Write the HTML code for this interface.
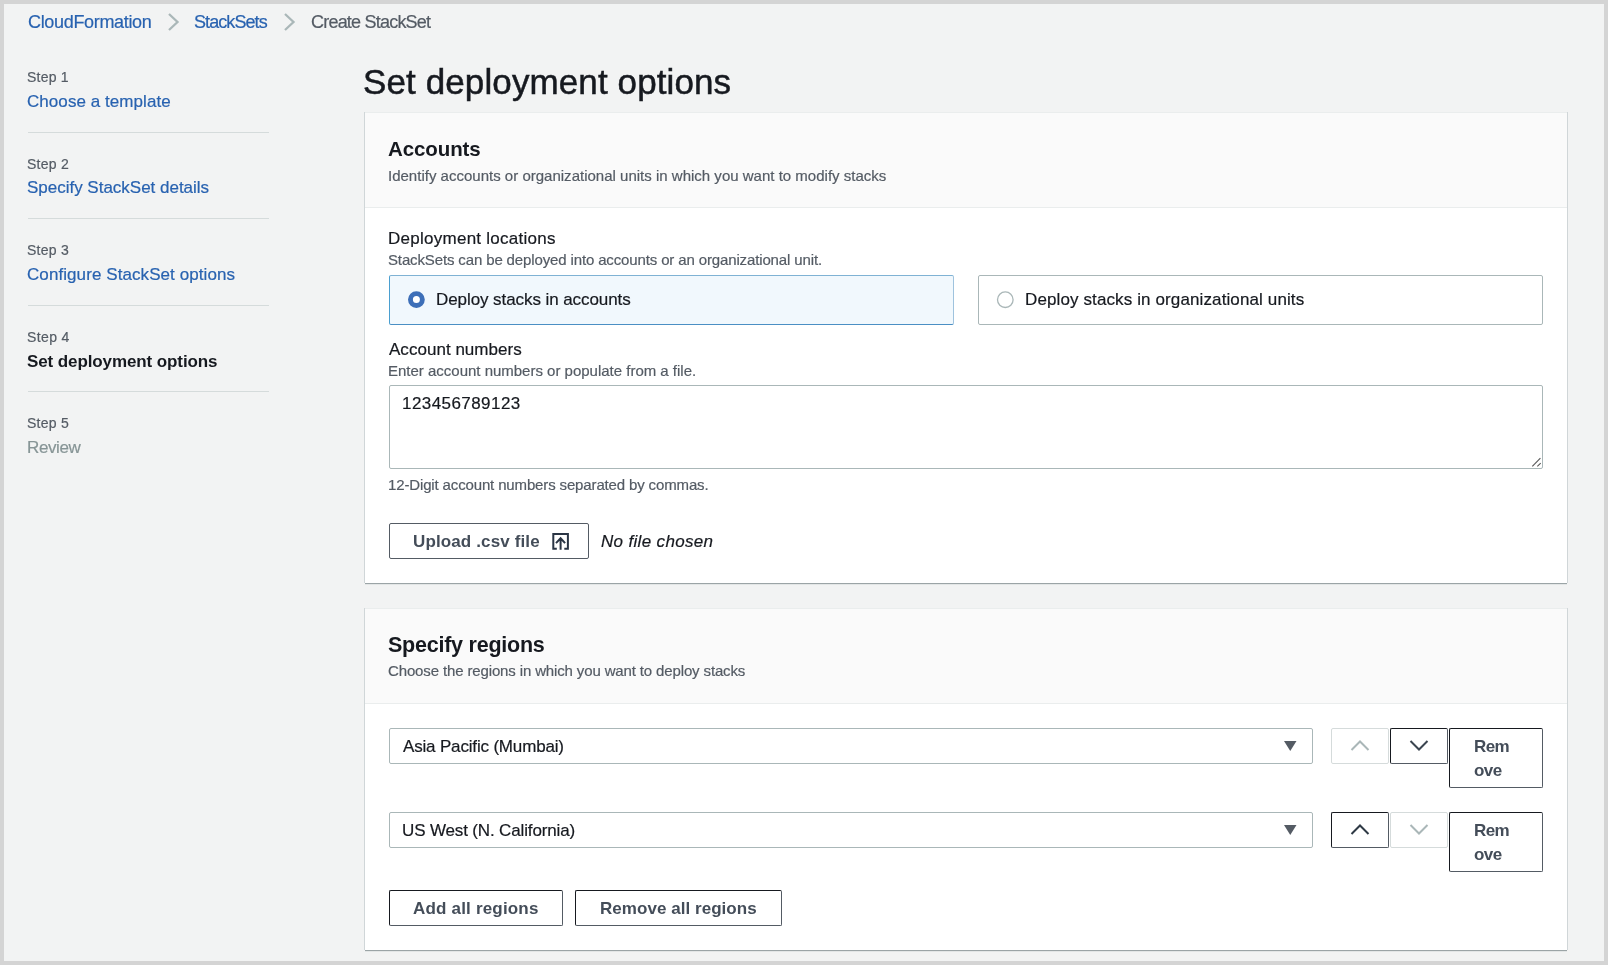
<!DOCTYPE html>
<html><head><meta charset="utf-8">
<style>
html,body{margin:0;padding:0;}
body{width:1608px;height:965px;position:relative;overflow:hidden;background:#d4d4d4;font-family:"Liberation Sans",sans-serif;color:#16191f;}
.a{position:absolute;box-sizing:border-box;}
.t{position:absolute;line-height:1;white-space:nowrap;will-change:transform;}
.sep{position:absolute;left:28px;width:241px;height:1px;background:#d5dbdb;}
.box{position:absolute;box-sizing:border-box;left:365px;width:1202px;background:#fff;border-top:1px solid #eaeded;box-shadow:0 1px 0 0 #9ba4a6,0 2px 0 0 rgba(0,28,36,.06),1px 0 0 0 #d0d6d8,-1px 0 0 0 #d0d6d8;}
.hdr{position:absolute;left:0;top:0;right:0;height:95px;box-sizing:border-box;background:#fafafa;border-bottom:1px solid #eaeded;}
.btn{position:absolute;box-sizing:border-box;border:1px solid #545b64;border-radius:2px;background:#fff;}
.inp{position:absolute;box-sizing:border-box;border:1px solid #aab7b8;border-radius:2px;background:#fff;}
svg{position:absolute;overflow:visible;}
</style></head><body>
<div class="a" style="left:4px;top:4px;width:1600px;height:957px;background:#f2f3f3"></div>
<!-- breadcrumb chevrons -->
<svg style="left:168px;top:13px" width="11" height="18"><polyline points="1,1 9.5,9 1,17" fill="none" stroke="#aab7b8" stroke-width="2.3"/></svg>
<svg style="left:284px;top:13px" width="11" height="18"><polyline points="1,1 9.5,9 1,17" fill="none" stroke="#aab7b8" stroke-width="2.3"/></svg>
<!-- nav separators -->
<div class="sep" style="top:132px"></div>
<div class="sep" style="top:218px"></div>
<div class="sep" style="top:305px"></div>
<div class="sep" style="top:391px"></div>
<!-- container 1 -->
<div class="box" style="top:112px;height:471px"><div class="hdr"></div></div>
<!-- tiles -->
<div class="a" style="left:389px;top:275px;width:565px;height:50px;border:1px solid #4a9fd0;border-top-color:#7fb2d4;border-right-color:#9fc3de;border-bottom-color:#4a8fc4;border-radius:2px;background:#f1f8fd"></div>
<div class="a" style="left:978px;top:275px;width:565px;height:50px;border:1px solid #aab7b8;border-radius:2px;background:#fff"></div>
<svg style="left:408px;top:291px" width="17" height="17"><circle cx="8.4" cy="8.6" r="5.95" fill="#fff" stroke="#3d6fb8" stroke-width="4.9"/></svg>
<svg style="left:997px;top:291px" width="17" height="17"><circle cx="8.3" cy="8.7" r="7.8" fill="#fff" stroke="#aab7b8" stroke-width="1.3"/></svg>
<!-- textarea -->
<div class="inp" style="left:389px;top:385px;width:1154px;height:84px"></div>
<svg style="left:1530px;top:455px" width="12" height="12"><line x1="2.3" y1="11.3" x2="10.4" y2="3.2" stroke="#555" stroke-width="1.1"/><line x1="7.3" y1="11.3" x2="10.7" y2="8.2" stroke="#555" stroke-width="1.1"/></svg>
<!-- upload button -->
<div class="btn" style="left:389px;top:523px;width:200px;height:36px"></div>
<svg style="left:552px;top:533px" width="17" height="17"><path d="M4.8,15.7 H1.3 V1 H15.9 V15.7 H12.3" fill="none" stroke="#2a3544" stroke-width="2"/><path d="M8.6,16.7 V5.3 M4,10.1 L8.6,5.3 L13.1,10.1" fill="none" stroke="#2a3544" stroke-width="2"/></svg>
<!-- container 2 -->
<div class="box" style="top:608px;height:342px"><div class="hdr"></div></div>
<!-- selects -->
<div class="inp" style="left:389px;top:728px;width:924px;height:36px"></div>
<div class="inp" style="left:389px;top:812px;width:924px;height:36px"></div>
<svg style="left:1284px;top:741px" width="13" height="10"><path d="M0,0 H12.5 L6.25,10 Z" fill="#545b64"/></svg>
<svg style="left:1284px;top:825px" width="13" height="10"><path d="M0,0 H12.5 L6.25,10 Z" fill="#545b64"/></svg>
<!-- row 1 buttons -->
<div class="a" style="left:1331px;top:728px;width:58px;height:36px;border:1px solid #d5dbdb;border-radius:2px;background:#fff"></div>
<svg style="left:1351px;top:740.3px" width="18" height="11"><polyline points="0.5,10 9,1.5 17.5,10" fill="none" stroke="#aab7b8" stroke-width="2"/></svg>
<div class="btn" style="left:1390px;top:728px;width:58px;height:36px;border-color:#16191f #545b64 #545b64 #16191f"></div>
<svg style="left:1410px;top:740px" width="18" height="11"><polyline points="0.5,1 9,9.5 17.5,1" fill="none" stroke="#3b4550" stroke-width="2"/></svg>
<div class="btn" style="left:1449px;top:728px;width:94px;height:60px;border-color:#16191f #545b64 #545b64 #16191f"></div>
<!-- row 2 buttons -->
<div class="btn" style="left:1331px;top:812px;width:58px;height:36px;border-color:#16191f #545b64 #545b64 #16191f"></div>
<svg style="left:1351px;top:824.4px" width="18" height="11"><polyline points="0.5,10 9,1.5 17.5,10" fill="none" stroke="#2e3945" stroke-width="2"/></svg>
<div class="a" style="left:1390px;top:812px;width:58px;height:36px;border:1px solid #d5dbdb;border-radius:2px;background:#fff"></div>
<svg style="left:1410px;top:824px" width="18" height="11"><polyline points="0.5,1 9,9.5 17.5,1" fill="none" stroke="#aab7b8" stroke-width="2"/></svg>
<div class="btn" style="left:1449px;top:812px;width:94px;height:60px;border-color:#16191f #545b64 #545b64 #16191f"></div>
<!-- add/remove all -->
<div class="btn" style="left:389px;top:890px;width:174px;height:36px;border-color:#16191f #545b64 #545b64 #16191f"></div>
<div class="btn" style="left:575px;top:890px;width:207px;height:36px;border-color:#16191f #545b64 #545b64 #16191f"></div>
<div class="t" style="left:27.8px;top:13px;font-size:18px;font-weight:400;font-style:normal;letter-spacing:-0.331px;color:#2862b0;-webkit-text-stroke:0.2px #2862b0">CloudFormation</div>
<div class="t" style="left:194.2px;top:13px;font-size:18px;font-weight:400;font-style:normal;letter-spacing:-0.925px;color:#2862b0;-webkit-text-stroke:0.2px #2862b0">StackSets</div>
<div class="t" style="left:311.4px;top:13px;font-size:18px;font-weight:400;font-style:normal;letter-spacing:-0.786px;color:#545b64;-webkit-text-stroke:0.2px #545b64">Create StackSet</div>
<div class="t" style="left:27.4px;top:70px;font-size:14px;font-weight:400;font-style:normal;letter-spacing:0.22px;color:#545b64;-webkit-text-stroke:0.2px #545b64">Step 1</div>
<div class="t" style="left:27.4px;top:93px;font-size:17px;font-weight:400;font-style:normal;letter-spacing:0.062px;color:#2862b0;-webkit-text-stroke:0.2px #2862b0">Choose a template</div>
<div class="t" style="left:27.4px;top:157px;font-size:14px;font-weight:400;font-style:normal;letter-spacing:0.28px;color:#545b64;-webkit-text-stroke:0.2px #545b64">Step 2</div>
<div class="t" style="left:27.3px;top:179px;font-size:17px;font-weight:400;font-style:normal;letter-spacing:-0.013px;color:#2862b0;-webkit-text-stroke:0.2px #2862b0">Specify StackSet details</div>
<div class="t" style="left:27.4px;top:243px;font-size:14px;font-weight:400;font-style:normal;letter-spacing:0.28px;color:#545b64;-webkit-text-stroke:0.2px #545b64">Step 3</div>
<div class="t" style="left:27.3px;top:266px;font-size:17px;font-weight:400;font-style:normal;letter-spacing:0.08px;color:#2862b0;-webkit-text-stroke:0.2px #2862b0">Configure StackSet options</div>
<div class="t" style="left:27.4px;top:330px;font-size:14px;font-weight:400;font-style:normal;letter-spacing:0.38px;color:#545b64;-webkit-text-stroke:0.2px #545b64">Step 4</div>
<div class="t" style="left:27.4px;top:353px;font-size:17px;font-weight:700;font-style:normal;letter-spacing:-0.1px;color:#16191f;-webkit-text-stroke:0.0px #16191f">Set deployment options</div>
<div class="t" style="left:27.4px;top:416px;font-size:14px;font-weight:400;font-style:normal;letter-spacing:0.28px;color:#545b64;-webkit-text-stroke:0.2px #545b64">Step 5</div>
<div class="t" style="left:27.4px;top:439px;font-size:17px;font-weight:400;font-style:normal;letter-spacing:-0.4px;color:#879596;-webkit-text-stroke:0.2px #879596">Review</div>
<div class="t" style="left:363.2px;top:64px;font-size:35px;font-weight:400;font-style:normal;letter-spacing:0.11px;color:#16191f;-webkit-text-stroke:0.5px #16191f">Set deployment options</div>
<div class="t" style="left:388.0px;top:139px;font-size:20.5px;font-weight:700;font-style:normal;letter-spacing:-0.1px;color:#16191f;-webkit-text-stroke:0.0px #16191f">Accounts</div>
<div class="t" style="left:388.0px;top:168px;font-size:15px;font-weight:400;font-style:normal;letter-spacing:0.007px;color:#545b64;-webkit-text-stroke:0.2px #545b64">Identify accounts or organizational units in which you want to modify stacks</div>
<div class="t" style="left:388.4px;top:230px;font-size:17px;font-weight:400;font-style:normal;letter-spacing:0.263px;color:#16191f;-webkit-text-stroke:0.2px #16191f">Deployment locations</div>
<div class="t" style="left:388.0px;top:252px;font-size:15px;font-weight:400;font-style:normal;letter-spacing:-0.134px;color:#545b64;-webkit-text-stroke:0.2px #545b64">StackSets can be deployed into accounts or an organizational unit.</div>
<div class="t" style="left:436.4px;top:291px;font-size:17px;font-weight:400;font-style:normal;letter-spacing:-0.075px;color:#16191f;-webkit-text-stroke:0.2px #16191f">Deploy stacks in accounts</div>
<div class="t" style="left:1025.2px;top:291px;font-size:17px;font-weight:400;font-style:normal;letter-spacing:0.117px;color:#16191f;-webkit-text-stroke:0.2px #16191f">Deploy stacks in organizational units</div>
<div class="t" style="left:388.9px;top:341px;font-size:17px;font-weight:400;font-style:normal;letter-spacing:0.029px;color:#16191f;-webkit-text-stroke:0.2px #16191f">Account numbers</div>
<div class="t" style="left:388.0px;top:363px;font-size:15px;font-weight:400;font-style:normal;letter-spacing:-0.007px;color:#545b64;-webkit-text-stroke:0.2px #545b64">Enter account numbers or populate from a file.</div>
<div class="t" style="left:401.8px;top:395px;font-size:17px;font-weight:400;font-style:normal;letter-spacing:0.436px;color:#16191f;-webkit-text-stroke:0.2px #16191f">123456789123</div>
<div class="t" style="left:388.0px;top:477px;font-size:15px;font-weight:400;font-style:normal;letter-spacing:-0.141px;color:#545b64;-webkit-text-stroke:0.2px #545b64">12-Digit account numbers separated by commas.</div>
<div class="t" style="left:413.4px;top:533px;font-size:17px;font-weight:700;font-style:normal;letter-spacing:0.127px;color:#444d59;-webkit-text-stroke:0.0px #444d59">Upload .csv file</div>
<div class="t" style="left:601.1px;top:533px;font-size:17px;font-weight:400;font-style:italic;letter-spacing:0.331px;color:#16191f;-webkit-text-stroke:0.2px #16191f">No file chosen</div>
<div class="t" style="left:388.0px;top:635px;font-size:21.5px;font-weight:700;font-style:normal;letter-spacing:-0.236px;color:#16191f;-webkit-text-stroke:0.0px #16191f">Specify regions</div>
<div class="t" style="left:388.0px;top:663px;font-size:15px;font-weight:400;font-style:normal;letter-spacing:-0.135px;color:#545b64;-webkit-text-stroke:0.2px #545b64">Choose the regions in which you want to deploy stacks</div>
<div class="t" style="left:402.5px;top:738px;font-size:17px;font-weight:400;font-style:normal;letter-spacing:-0.17px;color:#16191f;-webkit-text-stroke:0.2px #16191f">Asia Pacific (Mumbai)</div>
<div class="t" style="left:401.5px;top:822px;font-size:17px;font-weight:400;font-style:normal;letter-spacing:-0.145px;color:#16191f;-webkit-text-stroke:0.2px #16191f">US West (N. California)</div>
<div class="t" style="left:1474.2px;top:738px;font-size:17px;font-weight:700;font-style:normal;letter-spacing:-0.6px;color:#444d59;-webkit-text-stroke:0.0px #444d59">Rem</div>
<div class="t" style="left:1474.2px;top:762px;font-size:17px;font-weight:700;font-style:normal;letter-spacing:-0.6px;color:#444d59;-webkit-text-stroke:0.0px #444d59">ove</div>
<div class="t" style="left:1474.2px;top:822px;font-size:17px;font-weight:700;font-style:normal;letter-spacing:-0.6px;color:#444d59;-webkit-text-stroke:0.0px #444d59">Rem</div>
<div class="t" style="left:1474.2px;top:846px;font-size:17px;font-weight:700;font-style:normal;letter-spacing:-0.6px;color:#444d59;-webkit-text-stroke:0.0px #444d59">ove</div>
<div class="t" style="left:413.0px;top:900px;font-size:17px;font-weight:700;font-style:normal;letter-spacing:0.186px;color:#444d59;-webkit-text-stroke:0.0px #444d59">Add all regions</div>
<div class="t" style="left:599.7px;top:900px;font-size:17px;font-weight:700;font-style:normal;letter-spacing:0.047px;color:#444d59;-webkit-text-stroke:0.0px #444d59">Remove all regions</div>
</body></html>
